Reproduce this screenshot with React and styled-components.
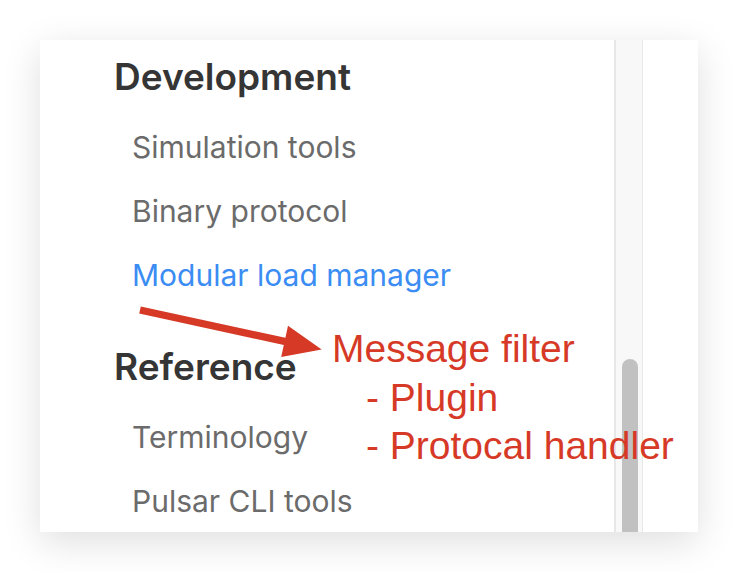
import * as React from "react";
import styled, { createGlobalStyle } from "styled-components";

const sections = [
  {
    title: "Development",
    items: [
      { label: "Simulation tools" },
      { label: "Binary protocol" },
      { label: "Modular load manager", active: true },
    ],
  },
  {
    title: "Reference",
    items: [{ label: "Terminology" }, { label: "Pulsar CLI tools" }],
  },
];

const GlobalStyle = createGlobalStyle`
  html, body {
    margin: 0;
    padding: 0;
    background: #fff;
  }
`;

function App() {
  return (
    <Page>
      <GlobalStyle />
      <Card>
        <Sidebar>
          {sections.map((section) => (
            <Section key={section.title}>
              <SectionTitle>{section.title}</SectionTitle>
              <ItemList>
                {section.items.map((item) => (
                  <Item key={item.label} $active={item.active}>
                    {item.label}
                  </Item>
                ))}
              </ItemList>
            </Section>
          ))}
        </Sidebar>
        <ScrollTrack>
          <ScrollThumb />
        </ScrollTrack>
        <RightPane />

        <Arrow viewBox="0 0 190 60" width="190" height="60">
          <polygon
            points="4.8,6.4 149.4,37.8 152,25.8 185.7,49.5 145.2,57 147.8,45 3.2,13.6"
            fill="#d63a27"
          />
        </Arrow>
        <Note>
          <NoteLine>Message filter</NoteLine>
          <NoteLine $indent>- Plugin</NoteLine>
          <NoteLine $indent>- Protocal handler</NoteLine>
        </Note>
      </Card>
    </Page>
  );
}

const Page = styled.div`
  width: 738px;
  height: 572px;
  padding: 40px;
  box-sizing: border-box;
  background: #fff;
`;

const Card = styled.div`
  position: relative;
  display: flex;
  width: 658px;
  height: 492px;
  background: #fff;
  box-shadow: 0 10px 36px rgba(0, 0, 0, 0.13);
  overflow: hidden;
`;

const Sidebar = styled.nav`
  flex: 1;
  display: flex;
  flex-direction: column;
  gap: 34px;
  padding: 11px 0 0 74px;
  font-family: Inter, "Noto Sans", sans-serif;
`;

const Section = styled.div`
  display: flex;
  flex-direction: column;
  gap: 12px;
`;

const SectionTitle = styled.div`
  font-size: 37px;
  font-weight: 600;
  line-height: 52px;
  color: #353535;
`;

const ItemList = styled.div`
  display: flex;
  flex-direction: column;
  padding-left: 18px;
`;

const Item = styled.div`
  height: 64px;
  font-size: 30px;
  line-height: 64px;
  color: ${(p) => (p.$active ? "#3b8cf3" : "#6b6b6b")};
  white-space: nowrap;
`;

const ScrollTrack = styled.div`
  width: 29px;
  padding: 319px 0 0 6px;
  box-sizing: border-box;
  background: #f8f8f8;
  border-left: 2px solid #e7e7e7;
  border-right: 1px solid #e7e7e7;
`;

const ScrollThumb = styled.div`
  width: 16px;
  height: 200px;
  border-radius: 8px;
  background: #c1c1c1;
`;

const RightPane = styled.div`
  width: 55px;
  background: #fff;
`;

const Arrow = styled.svg`
  position: absolute;
  left: 96px;
  top: 260px;
`;

const Note = styled.div`
  position: absolute;
  left: 292px;
  top: 285px;
  font-family: "Liberation Sans", Arial, sans-serif;
  font-size: 39px;
  line-height: 48.5px;
  color: #d63a27;
  white-space: nowrap;
`;

const NoteLine = styled.div`
  padding-left: ${(p) => (p.$indent ? "34px" : "0")};
`;

export default App;
